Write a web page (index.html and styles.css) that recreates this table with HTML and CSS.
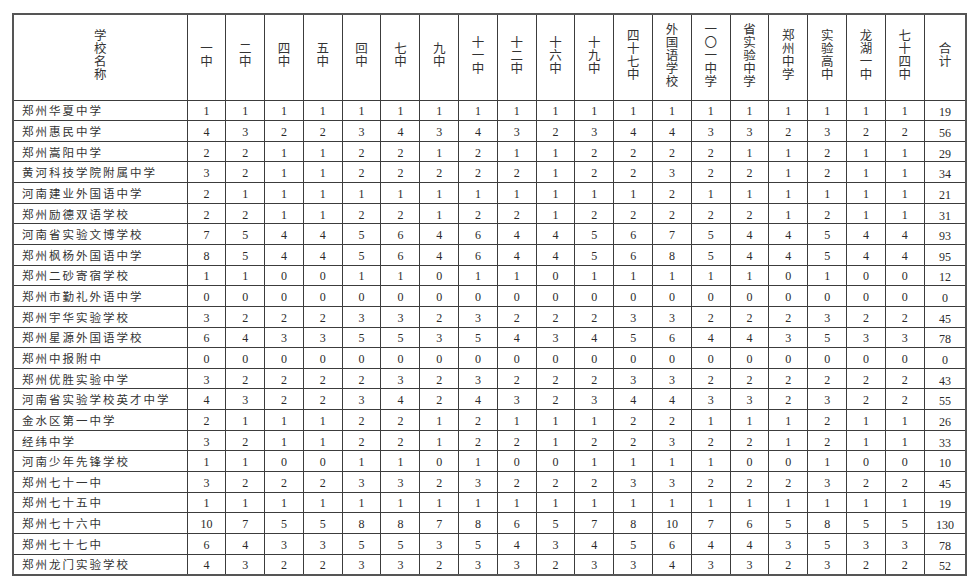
FILE: index.html
```html
<!DOCTYPE html>
<html lang="zh-CN">
<head>
<meta charset="utf-8">
<title>学校名额分配表</title>
<link rel="stylesheet" href="styles.css">
</head>
<body>
<table class="quota">
<colgroup>
<col class="c-name">
<col class="c-num"><col class="c-num"><col class="c-num"><col class="c-num"><col class="c-num">
<col class="c-num"><col class="c-num"><col class="c-num"><col class="c-num"><col class="c-num">
<col class="c-num"><col class="c-num"><col class="c-num"><col class="c-num"><col class="c-num">
<col class="c-num"><col class="c-num"><col class="c-num"><col class="c-num">
<col class="c-total">
</colgroup>
<thead>
<tr class="head">
<th><span class="vt">学校名称</span></th>
<th><span class="vt">一中</span></th>
<th><span class="vt">二中</span></th>
<th><span class="vt">四中</span></th>
<th><span class="vt">五中</span></th>
<th><span class="vt">回中</span></th>
<th><span class="vt">七中</span></th>
<th><span class="vt">九中</span></th>
<th><span class="vt">十一中</span></th>
<th><span class="vt">十二中</span></th>
<th><span class="vt">十六中</span></th>
<th><span class="vt">十九中</span></th>
<th><span class="vt">四十七中</span></th>
<th><span class="vt">外国语学校</span></th>
<th><span class="vt">一〇一中学</span></th>
<th><span class="vt">省实验中学</span></th>
<th><span class="vt">郑州中学</span></th>
<th><span class="vt">实验高中</span></th>
<th><span class="vt">龙湖一中</span></th>
<th><span class="vt">七十四中</span></th>
<th><span class="vt">合计</span></th>
</tr>
</thead>
<tbody>
<tr><td class="name">郑州华夏中学</td><td>1</td><td>1</td><td>1</td><td>1</td><td>1</td><td>1</td><td>1</td><td>1</td><td>1</td><td>1</td><td>1</td><td>1</td><td>1</td><td>1</td><td>1</td><td>1</td><td>1</td><td>1</td><td>1</td><td class="total">19</td></tr>
<tr><td class="name">郑州惠民中学</td><td>4</td><td>3</td><td>2</td><td>2</td><td>3</td><td>4</td><td>3</td><td>4</td><td>3</td><td>2</td><td>3</td><td>4</td><td>4</td><td>3</td><td>3</td><td>2</td><td>3</td><td>2</td><td>2</td><td class="total">56</td></tr>
<tr><td class="name">郑州嵩阳中学</td><td>2</td><td>2</td><td>1</td><td>1</td><td>2</td><td>2</td><td>1</td><td>2</td><td>1</td><td>1</td><td>2</td><td>2</td><td>2</td><td>2</td><td>1</td><td>1</td><td>2</td><td>1</td><td>1</td><td class="total">29</td></tr>
<tr><td class="name">黄河科技学院附属中学</td><td>3</td><td>2</td><td>1</td><td>1</td><td>2</td><td>2</td><td>2</td><td>2</td><td>2</td><td>1</td><td>2</td><td>2</td><td>3</td><td>2</td><td>2</td><td>1</td><td>2</td><td>1</td><td>1</td><td class="total">34</td></tr>
<tr><td class="name">河南建业外国语中学</td><td>2</td><td>1</td><td>1</td><td>1</td><td>1</td><td>1</td><td>1</td><td>1</td><td>1</td><td>1</td><td>1</td><td>1</td><td>2</td><td>1</td><td>1</td><td>1</td><td>1</td><td>1</td><td>1</td><td class="total">21</td></tr>
<tr><td class="name">郑州励德双语学校</td><td>2</td><td>2</td><td>1</td><td>1</td><td>2</td><td>2</td><td>1</td><td>2</td><td>2</td><td>1</td><td>2</td><td>2</td><td>2</td><td>2</td><td>2</td><td>1</td><td>2</td><td>1</td><td>1</td><td class="total">31</td></tr>
<tr><td class="name">河南省实验文博学校</td><td>7</td><td>5</td><td>4</td><td>4</td><td>5</td><td>6</td><td>4</td><td>6</td><td>4</td><td>4</td><td>5</td><td>6</td><td>7</td><td>5</td><td>4</td><td>4</td><td>5</td><td>4</td><td>4</td><td class="total">93</td></tr>
<tr><td class="name">郑州枫杨外国语中学</td><td>8</td><td>5</td><td>4</td><td>4</td><td>5</td><td>6</td><td>4</td><td>6</td><td>4</td><td>4</td><td>5</td><td>6</td><td>8</td><td>5</td><td>4</td><td>4</td><td>5</td><td>4</td><td>4</td><td class="total">95</td></tr>
<tr><td class="name">郑州二砂寄宿学校</td><td>1</td><td>1</td><td>0</td><td>0</td><td>1</td><td>1</td><td>0</td><td>1</td><td>1</td><td>0</td><td>1</td><td>1</td><td>1</td><td>1</td><td>1</td><td>0</td><td>1</td><td>0</td><td>0</td><td class="total">12</td></tr>
<tr><td class="name">郑州市勤礼外语中学</td><td>0</td><td>0</td><td>0</td><td>0</td><td>0</td><td>0</td><td>0</td><td>0</td><td>0</td><td>0</td><td>0</td><td>0</td><td>0</td><td>0</td><td>0</td><td>0</td><td>0</td><td>0</td><td>0</td><td class="total">0</td></tr>
<tr><td class="name">郑州宇华实验学校</td><td>3</td><td>2</td><td>2</td><td>2</td><td>3</td><td>3</td><td>2</td><td>3</td><td>2</td><td>2</td><td>2</td><td>3</td><td>3</td><td>2</td><td>2</td><td>2</td><td>3</td><td>2</td><td>2</td><td class="total">45</td></tr>
<tr><td class="name">郑州星源外国语学校</td><td>6</td><td>4</td><td>3</td><td>3</td><td>5</td><td>5</td><td>3</td><td>5</td><td>4</td><td>3</td><td>4</td><td>5</td><td>6</td><td>4</td><td>4</td><td>3</td><td>5</td><td>3</td><td>3</td><td class="total">78</td></tr>
<tr><td class="name">郑州中报附中</td><td>0</td><td>0</td><td>0</td><td>0</td><td>0</td><td>0</td><td>0</td><td>0</td><td>0</td><td>0</td><td>0</td><td>0</td><td>0</td><td>0</td><td>0</td><td>0</td><td>0</td><td>0</td><td>0</td><td class="total">0</td></tr>
<tr><td class="name">郑州优胜实验中学</td><td>3</td><td>2</td><td>2</td><td>2</td><td>2</td><td>3</td><td>2</td><td>3</td><td>2</td><td>2</td><td>2</td><td>3</td><td>3</td><td>2</td><td>2</td><td>2</td><td>2</td><td>2</td><td>2</td><td class="total">43</td></tr>
<tr><td class="name">河南省实验学校英才中学</td><td>4</td><td>3</td><td>2</td><td>2</td><td>3</td><td>4</td><td>2</td><td>4</td><td>3</td><td>2</td><td>3</td><td>4</td><td>4</td><td>3</td><td>3</td><td>2</td><td>3</td><td>2</td><td>2</td><td class="total">55</td></tr>
<tr><td class="name">金水区第一中学</td><td>2</td><td>1</td><td>1</td><td>1</td><td>2</td><td>2</td><td>1</td><td>2</td><td>1</td><td>1</td><td>1</td><td>2</td><td>2</td><td>1</td><td>1</td><td>1</td><td>2</td><td>1</td><td>1</td><td class="total">26</td></tr>
<tr><td class="name">经纬中学</td><td>3</td><td>2</td><td>1</td><td>1</td><td>2</td><td>2</td><td>1</td><td>2</td><td>2</td><td>1</td><td>2</td><td>2</td><td>3</td><td>2</td><td>2</td><td>1</td><td>2</td><td>1</td><td>1</td><td class="total">33</td></tr>
<tr><td class="name">河南少年先锋学校</td><td>1</td><td>1</td><td>0</td><td>0</td><td>1</td><td>1</td><td>0</td><td>1</td><td>0</td><td>0</td><td>1</td><td>1</td><td>1</td><td>1</td><td>0</td><td>0</td><td>1</td><td>0</td><td>0</td><td class="total">10</td></tr>
<tr><td class="name">郑州七十一中</td><td>3</td><td>2</td><td>2</td><td>2</td><td>3</td><td>3</td><td>2</td><td>3</td><td>2</td><td>2</td><td>2</td><td>3</td><td>3</td><td>2</td><td>2</td><td>2</td><td>3</td><td>2</td><td>2</td><td class="total">45</td></tr>
<tr><td class="name">郑州七十五中</td><td>1</td><td>1</td><td>1</td><td>1</td><td>1</td><td>1</td><td>1</td><td>1</td><td>1</td><td>1</td><td>1</td><td>1</td><td>1</td><td>1</td><td>1</td><td>1</td><td>1</td><td>1</td><td>1</td><td class="total">19</td></tr>
<tr><td class="name">郑州七十六中</td><td>10</td><td>7</td><td>5</td><td>5</td><td>8</td><td>8</td><td>7</td><td>8</td><td>6</td><td>5</td><td>7</td><td>8</td><td>10</td><td>7</td><td>6</td><td>5</td><td>8</td><td>5</td><td>5</td><td class="total">130</td></tr>
<tr><td class="name">郑州七十七中</td><td>6</td><td>4</td><td>3</td><td>3</td><td>5</td><td>5</td><td>3</td><td>5</td><td>4</td><td>3</td><td>4</td><td>5</td><td>6</td><td>4</td><td>4</td><td>3</td><td>5</td><td>3</td><td>3</td><td class="total">78</td></tr>
<tr><td class="name">郑州龙门实验学校</td><td>4</td><td>3</td><td>2</td><td>2</td><td>3</td><td>3</td><td>2</td><td>3</td><td>3</td><td>2</td><td>3</td><td>3</td><td>4</td><td>3</td><td>3</td><td>2</td><td>3</td><td>2</td><td>2</td><td class="total">52</td></tr>
</tbody>
</table>
</body>
</html>
```
FILE: styles.css
```css
html, body {
  margin: 0;
  padding: 0;
  background: #ffffff;
}

body {
  padding: 13px 0 0 12px;
  font-family: "Liberation Serif", "Noto Sans CJK SC", serif;
  color: #2a2a2a;
}

.quota {
  border-collapse: collapse;
  table-layout: fixed;
  width: 954px;
  border: 2px solid #555555;
}

.c-name { width: 174px; }
.c-num { width: 38.8px; }
.c-total { width: 42px; }

.quota th,
.quota td {
  border: 1px solid #3c3c3c;
  padding: 0;
  text-align: center;
  vertical-align: middle;
  overflow: hidden;
}

.head {
  height: 86px;
}

.head th {
  font-family: "Noto Sans CJK SC", sans-serif;
  font-weight: 400;
  font-size: 12.5px;
  color: #333333;
}

.vt {
  display: inline-block;
  writing-mode: vertical-rl;
  line-height: 13px;
  letter-spacing: 0.5px;
}

.quota tbody tr {
  height: 20.65px;
}

.quota td {
  font-size: 12px;
  line-height: 14px;
  padding-top: 2px;
}

.quota td.name {
  text-align: left;
  padding-left: 8px;
  padding-top: 0;
  font-family: "Noto Sans CJK SC", sans-serif;
  font-size: 11.5px;
  letter-spacing: 2px;
  color: #333333;
}

.quota td.total {
  padding-top: 4px;
}
```
